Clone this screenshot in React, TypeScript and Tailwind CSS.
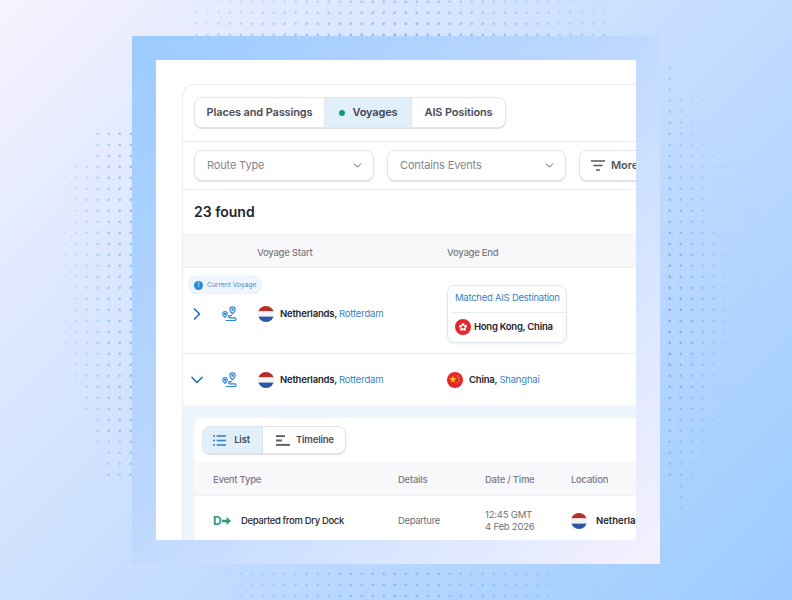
import React from 'react';
import { ChevronDown, ChevronRight } from 'lucide-react';

// Background dots: one shared 11px grid, each block has its own rough fade
const dots: { x: number; y: number; o: number }[] = [];
const visible = (x: number, y: number) => {
  // top band
  if (y < 36 && x > 190 && x < 610) return 0.5 - Math.abs(x - 400) / 480 + y / 140;
  // bottom band
  if (y > 570 && x > 222 && x < 600) {
    if (y > 580 && x < 236) return 0;
    return 0.6 - Math.abs(x - 400) / 400;
  }
  if (y > 560 && y < 570 && x > 258 && x < 510) return 0.4;
  // left block, stepped toward the lower right
  if (x < 132 && x > 60) {
    const top = x < 70 ? 177 : x < 95 ? 166 : 133;
    const bottom = x < 70 ? 345 : x < 80 ? 378 : x < 90 ? 410 : x < 100 ? 443 : 478;
    if (y < top || y > bottom) return 0;
    return 0.12 + (x - 64) / 140 - (y > 440 ? 0.1 : 0);
  }
  // right block
  if (x > 660 && x < 760) {
    const top = x < 675 ? 66 : x < 710 ? 99 : x < 720 ? 132 : x < 742 ? 165 : 198;
    const bottom = x < 675 ? 478 : x < 686 ? 512 : x < 720 ? 478 : x < 742 ? 445 : 345;
    if (y < top || y > bottom) return 0;
    return Math.max(0.12, 0.8 - (x - 670) / 100 - Math.abs(y - 310) / 500);
  }
  return 0;
};
for (let i = 0; i < 72; i++) {
  for (let j = 0; j < 55; j++) {
    const x = 11 * i + 9.7;
    const y = 11 * j + 1.7;
    const o = visible(x, y);
    if (o > 0) dots.push({ x, y, o });
  }
}

const DotField = () => (
  <svg className="absolute inset-0" width="792" height="600" aria-hidden="true">
    {dots.map((d) => (
      <circle key={`${d.x}-${d.y}`} cx={d.x} cy={d.y} r="1.3" fill="#5f9ff2" opacity={d.o} />
    ))}
  </svg>
);

const NlFlag = () => (
  <svg width="16" height="16" viewBox="0 0 16 16" className="shrink-0">
    <defs>
      <clipPath id="nl-clip">
        <circle cx="8" cy="8" r="8" />
      </clipPath>
    </defs>
    <g clipPath="url(#nl-clip)">
      <rect width="16" height="5.4" fill="#b5302a" />
      <rect y="5.4" width="16" height="5.2" fill="#f2f2f2" />
      <rect y="10.6" width="16" height="5.4" fill="#2c55a8" />
    </g>
  </svg>
);

const HkFlag = () => (
  <svg width="16" height="16" viewBox="0 0 16 16" className="shrink-0">
    <circle cx="8" cy="8" r="8" fill="#e5262b" />
    <g fill="#fff">
      <circle cx="8" cy="5.4" r="1.5" />
      <circle cx="10.5" cy="7.2" r="1.5" />
      <circle cx="9.5" cy="10.2" r="1.5" />
      <circle cx="6.5" cy="10.2" r="1.5" />
      <circle cx="5.5" cy="7.2" r="1.5" />
    </g>
    <circle cx="8" cy="8" r="0.8" fill="#e5262b" />
  </svg>
);

const CnFlag = () => (
  <svg width="16" height="16" viewBox="0 0 16 16" className="shrink-0">
    <circle cx="8" cy="8" r="8" fill="#e5262b" />
    <polygon
      fill="#fcd116"
      points="6,3.6 6.9,6.3 9.7,6.3 7.4,8 8.3,10.7 6,9 3.7,10.7 4.6,8 2.3,6.3 5.1,6.3"
    />
    <circle cx="10.4" cy="4" r="0.7" fill="#fcd116" />
    <circle cx="12" cy="6" r="0.7" fill="#fcd116" />
    <circle cx="12" cy="8.6" r="0.7" fill="#fcd116" />
    <circle cx="10.4" cy="10.6" r="0.7" fill="#fcd116" />
  </svg>
);

const RouteIcon = () => (
  <svg width="15" height="16" viewBox="0 0 15 16" fill="none" stroke="#2f86d6" strokeWidth="1.2" className="shrink-0">
    <path d="M10.5 .8a2.7 2.7 0 0 1 2.7 2.7c0 1.7-2.7 4.2-2.7 4.2S7.8 5.2 7.8 3.5A2.7 2.7 0 0 1 10.5 .8Z" />
    <circle cx="10.5" cy="3.5" r=".7" fill="#2f86d6" />
    <path d="M3 5.5a2.3 2.3 0 0 1 2.3 2.3C5.3 9.3 3 11.4 3 11.4S.7 9.3 .7 7.8A2.3 2.3 0 0 1 3 5.5Z" />
    <circle cx="3" cy="7.8" r=".6" fill="#2f86d6" />
    <path d="M3.5 14.5H13c1.3 0 1.3-2.6 0-2.6H7.5c-1.1 0-1.1-2.2 0-2.2H10" />
  </svg>
);

const ListIcon = () => (
  <svg width="13" height="11" viewBox="0 0 13 11" fill="#3b82c8" className="shrink-0">
    <rect width="2" height="1.6" y=".2" />
    <rect x="3.6" width="9.4" height="1.6" y=".2" />
    <rect width="2" height="1.6" y="4.7" />
    <rect x="3.6" width="9.4" height="1.6" y="4.7" />
    <rect width="2" height="1.6" y="9.2" />
    <rect x="3.6" width="9.4" height="1.6" y="9.2" />
  </svg>
);

const TimelineIcon = () => (
  <svg width="14" height="11" viewBox="0 0 14 11" fill="#63636e" className="shrink-0">
    <rect width="9" height="2" y=".1" />
    <rect width="6" height="2" y="4.5" />
    <rect width="14" height="2" y="8.9" />
  </svg>
);

const FilterIcon = () => (
  <svg width="14" height="11" viewBox="0 0 14 11" fill="none" stroke="#55555f" strokeWidth="1.3" className="shrink-0">
    <path d="M0 1h14M2.5 5.5h9M5 10h4" />
  </svg>
);

const Place = ({ country, city }: { country: string; city: string }) => (
  <span className="block leading-none text-[9.5px] tracking-[-0.2px] font-semibold text-[#24242c] whitespace-nowrap">
    {country}, <span className="font-normal text-[#3b7fc4]">{city}</span>
  </span>
);

const Select = ({ label, width }: { label: string; width: string }) => (
  <div className={`${width} h-[31px] flex items-center justify-between pl-3 pr-[9px] bg-white border border-[#e4e4ea] rounded-lg shadow-[0_1px_1px_rgba(0,0,0,0.12)]`}>
    <span className="text-[11px] tracking-[-0.15px] text-[#85858f]">{label}</span>
    <ChevronDown size={13} color="#55555f" strokeWidth={1.8} />
  </div>
);

export default function App() {
  return (
    <div
      className="relative w-[792px] h-[600px] flex items-center justify-center overflow-hidden bg-[linear-gradient(135deg,#f8f2ff_0%,#dde8ff_25%,#c3dcff_55%,#9ccbff_100%)]"
      style={{ fontFamily: 'Inter, "Liberation Sans", sans-serif' }}
    >
      <DotField />

      <div className="relative w-[528px] h-[528px] p-6 bg-[linear-gradient(135deg,#9ccbff_0%,#bcd7ff_45%,#dbe7ff_75%,#f6f1ff_100%)]">
        <div className="w-[480px] h-[480px] bg-white overflow-hidden pl-[26px] pt-6">
          <div className="w-[560px] border border-[#ececf0] rounded-tl-xl">
            {/* Tabs */}
            <div className="h-[57px] pl-[11px] pt-3 border-b border-[#ececf0]">
              <div className="w-[312px] h-[31px] flex bg-white border border-[#e4e4ea] rounded-lg shadow-[0_1px_1px_rgba(0,0,0,0.14)] overflow-hidden text-[11px] tracking-[-0.15px] font-semibold text-[#4c4c57]">
                <div className="w-[130px] flex items-center justify-center border-r border-[#e4e4ea]">Places and Passings</div>
                <div className="w-[87px] flex items-center justify-center gap-2 bg-[#e1effb] border-r border-[#e4e4ea] text-[#3d4658]">
                  <span className="w-[6px] h-[6px] rounded-full bg-[#0f9b77]" />
                  Voyages
                </div>
                <div className="flex-1 flex items-center justify-center">AIS Positions</div>
              </div>
            </div>

            {/* Filters */}
            <div className="h-[48px] pl-[11px] flex items-center gap-[13px] border-b border-[#ececf0]">
              <Select label="Route Type" width="w-[180px]" />
              <Select label="Contains Events" width="w-[179px]" />
              <div className="w-[90px] h-[31px] flex items-center gap-[6px] pl-[11px] bg-white border border-[#e4e4ea] rounded-lg shadow-[0_1px_1px_rgba(0,0,0,0.14)]">
                <FilterIcon />
                <span className="text-[11px] tracking-[-0.1px] font-semibold text-[#55555f]">More</span>
              </div>
            </div>

            {/* Count */}
            <div className="h-[44px] pl-[11px] pb-[2px] flex items-center text-[14px] font-semibold text-[#24242c]">23 found</div>

            {/* Voyage table */}
            <div className="h-[34px] pt-1 flex items-center bg-[#f8f7fa] border-y border-[#f0eff3] text-[9.5px] tracking-[-0.25px] font-medium text-[#7b7b86]">
              <span className="ml-[74px] w-[190px]">Voyage Start</span>
              <span>Voyage End</span>
            </div>

            <div className="relative h-[86px] pt-[6px] flex items-center border-b border-[#ececf0]">
              <div className="absolute left-[6px] top-[8px] h-[18px] flex items-center gap-[4px] px-[5px] bg-[#eef5fd] rounded-lg shadow-[0_0_1px_rgba(60,120,200,0.4)]">
                <span className="w-[9px] h-[9px] rounded-full bg-[#2a8ad9] flex items-center justify-center text-[6px] leading-none text-white">!</span>
                <span className="text-[6.7px] leading-none text-[#4a8bcb]">Current Voyage</span>
              </div>
              <ChevronRight size={20} color="#2a6fb5" strokeWidth={2} className="ml-[4px]" />
              <div className="ml-[15px] mr-[21px]"><RouteIcon /></div>
              <NlFlag />
              <div className="ml-[6px] w-[167px]"><Place country="Netherlands" city="Rotterdam" /></div>
              <div className="w-[120px] h-[58px] border border-[#dce8f6] rounded-lg shadow-[0_1px_2px_rgba(60,120,200,0.12)]">
                <div className="h-[27px] ml-[4px] flex items-center pl-[3px] border-b border-[#e8edf4] text-[9.5px] tracking-[-0.25px] text-[#3b7fc4] whitespace-nowrap">Matched AIS Destination</div>
                <div className="h-[29px] flex items-center gap-[3px] pl-[7px] text-[9.5px] tracking-[-0.25px] font-semibold text-[#24242c]">
                  <HkFlag />
                  Hong Kong, China
                </div>
              </div>
            </div>

            <div className="h-[51px] flex items-center">
              <ChevronDown size={20} color="#2a6fb5" strokeWidth={2} className="ml-[4px]" />
              <div className="ml-[15px] mr-[21px]"><RouteIcon /></div>
              <NlFlag />
              <div className="ml-[6px] w-[167px]"><Place country="Netherlands" city="Rotterdam" /></div>
              <CnFlag />
              <div className="ml-[6px]"><Place country="China" city="Shanghai" /></div>
            </div>

            {/* Expanded events */}
            <div className="bg-[#eff5fd] pl-[11px] pt-[13px] h-[135px]">
              <div className="bg-white h-full rounded-tl-md">
                <div className="h-[44px] pl-2 pt-2">
                  <div className="w-[144px] h-[28px] flex bg-white border border-[#dfe3ea] rounded-lg shadow-[0_1px_1px_rgba(0,0,0,0.12)] overflow-hidden text-[9.5px] tracking-[-0.2px] font-semibold text-[#4c4c57]">
                    <div className="w-[60px] pr-[2px] flex items-center justify-center gap-2 bg-[#e1effb] border-r border-[#d8e2ee]">
                      <ListIcon />
                      List
                    </div>
                    <div className="flex-1 flex items-center gap-[6px] pl-[13px]">
                      <TimelineIcon />
                      Timeline
                    </div>
                  </div>
                </div>
                <div className="h-[34px] pt-[3px] flex items-center bg-[#f8f7fa] border-b border-[#f0eff3] text-[9.5px] tracking-[-0.25px] font-medium text-[#7b7b86]">
                  <span className="ml-[19px] w-[185px]">Event Type</span>
                  <span className="w-[87px]">Details</span>
                  <span className="w-[86px]">Date / Time</span>
                  <span>Location</span>
                </div>
                <div className="h-[50px] flex items-center">
                  <div className="ml-[19px] w-[28px] flex items-center">
                    <span className="text-[12px] font-bold text-[#2f9a80]">D</span>
                    <svg width="9" height="8" viewBox="0 0 9 8" fill="#2f9a80" className="shrink-0">
                      <path d="M0 2.8h4.5V0L9 4 4.5 8V5.2H0Z" />
                    </svg>
                  </div>
                  <span className="w-[157px] text-[9.5px] tracking-[-0.35px] font-medium text-[#2c2c35] whitespace-nowrap">Departed from Dry Dock</span>
                  <span className="w-[87px] text-[9.5px] tracking-[-0.35px] text-[#6f6f7a]">Departure</span>
                  <span className="w-[86px] text-[9.5px] tracking-[-0.2px] leading-[12px] text-[#6f6f7a]">12:45 GMT<br />4 Feb 2026</span>
                  <NlFlag />
                  <span className="ml-[9px] text-[9.5px] font-semibold text-[#24242c] whitespace-nowrap">Netherlands</span>
                </div>
              </div>
            </div>
          </div>
        </div>
      </div>
    </div>
  );
}
